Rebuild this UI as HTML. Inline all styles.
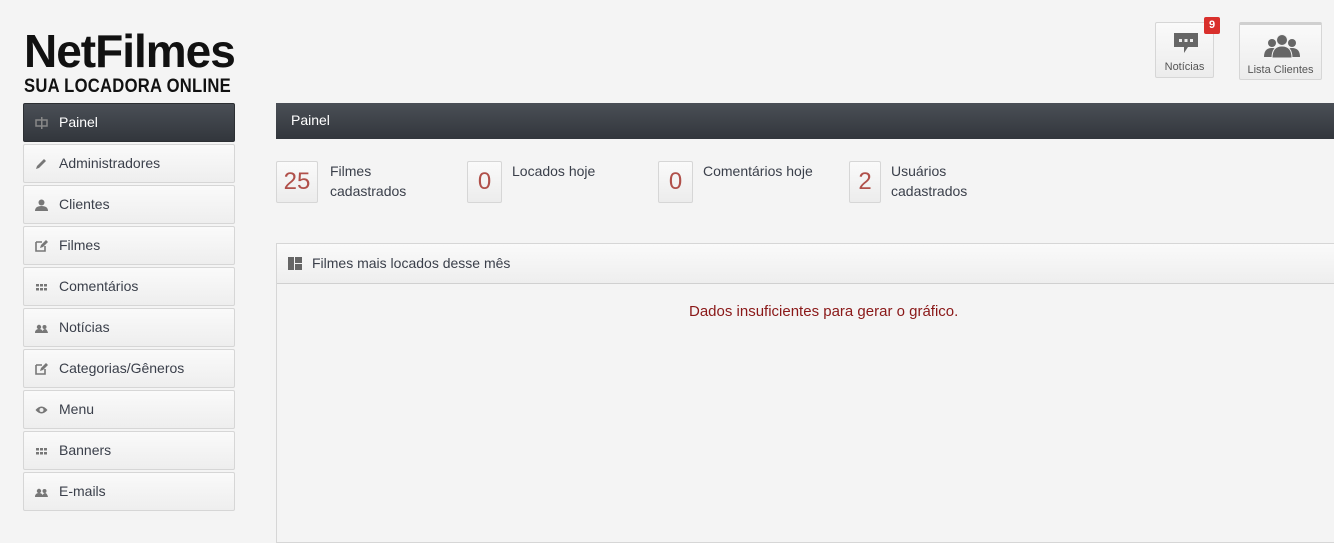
<!DOCTYPE html>
<html><head><meta charset="utf-8"><style>
*{box-sizing:border-box;margin:0;padding:0}
body{width:1334px;height:539px;overflow:hidden;background:#f4f4f4;font-family:"Liberation Sans",sans-serif;color:#444;position:relative}
.logo1{position:absolute;left:24px;top:28px;font:900 46px/46px "Liberation Sans",sans-serif;letter-spacing:-1px;color:#111;transform:scaleX(1.0);transform-origin:left;white-space:nowrap}
.logo2{position:absolute;left:24px;top:77px;font:700 19px/20px "Liberation Sans",sans-serif;color:#111;letter-spacing:0.3px;transform:scaleX(0.875);transform-origin:left;white-space:nowrap}
.nav{position:absolute;left:23px;width:212px;height:39px;background:linear-gradient(#fafafa,#eeeeee);border:1px solid #d6d6d6;border-radius:2px;font-size:14px;line-height:37px;padding-left:35px;color:#3a3f4a}
.nav.act{background:linear-gradient(#4a4f56,#32363c);color:#fff;border-color:#2c2f33}
.nav .ic{position:absolute;left:11px;top:13px;width:13px;height:12px}
.bar{position:absolute;left:276px;top:103px;width:1060px;height:36px;background:linear-gradient(#4a4f56,#32363c);color:#fff;font-size:14px;line-height:34px;padding-left:15px}
.sbox{position:absolute;top:161px;height:42px;background:linear-gradient(#fafafa,#ececec);border:1px solid #d6d6d6;border-radius:2px;color:#b0504a;font-size:24px;line-height:40px;text-align:center}
.slab{position:absolute;top:161px;font-size:14px;line-height:20px;color:#3a3f4a}
.panel{position:absolute;left:276px;top:243px;width:1070px;height:300px;border:1px solid #d6d6d6}
.ph{height:40px;background:linear-gradient(#fafafa,#eeeeee);border-bottom:1px solid #d0d0d0;font-size:14px;line-height:38px;padding-left:35px;position:relative;color:#3a3f4a}
.msg{position:absolute;left:689px;top:303px;color:#8a1818;font-size:15px}
.tb{position:absolute;background:linear-gradient(#fafafa,#ececec);border:1px solid #d6d6d6;border-radius:2px;font-size:11px;color:#555;text-align:center}
</style></head><body>
<div class="logo1">NetFilmes</div>
<div class="logo2">SUA LOCADORA ONLINE</div>

<div class="nav act" style="top:103px"><svg class="ic" viewBox="0 0 13 12"><rect x="1" y="3" width="11" height="6" fill="none" stroke="#888" stroke-width="1.5"/><rect x="6" y="0" width="1.5" height="12" fill="#888"/></svg>Painel</div>
<div class="nav" style="top:144px"><svg class="ic" viewBox="0 0 13 12"><path d="M1 11l1-3 7-7 2 2-7 7z" fill="#777"/></svg>Administradores</div>
<div class="nav" style="top:185px"><svg class="ic" viewBox="0 0 13 12"><circle cx="6.5" cy="3.5" r="3" fill="#777"/><path d="M0 12q0-5 6.5-5t6.5 5z" fill="#777"/></svg>Clientes</div>
<div class="nav" style="top:226px"><svg class="ic" viewBox="0 0 13 12"><path d="M1 2h6M1 2v9h9V6" fill="none" stroke="#777" stroke-width="1.6"/><path d="M5 8l1-3 5-5 2 2-5 5z" fill="#777"/></svg>Filmes</div>
<div class="nav" style="top:267px"><svg class="ic" viewBox="0 0 13 12"><g fill="#777"><rect x="1" y="3" width="3" height="2.5"/><rect x="5" y="3" width="3" height="2.5"/><rect x="9" y="3" width="3" height="2.5"/><rect x="1" y="7" width="3" height="2.5"/><rect x="5" y="7" width="3" height="2.5"/><rect x="9" y="7" width="3" height="2.5"/></g></svg>Comentários</div>
<div class="nav" style="top:308px"><svg class="ic" viewBox="0 0 13 12"><g fill="#777"><circle cx="4" cy="5" r="2.2"/><path d="M0 11q0-4 4-4t4 4z"/><circle cx="9.5" cy="5" r="2"/><path d="M7 11q1-4 3-4t3 4z"/></g></svg>Notícias</div>
<div class="nav" style="top:349px"><svg class="ic" viewBox="0 0 13 12"><path d="M1 2h6M1 2v9h9V6" fill="none" stroke="#777" stroke-width="1.6"/><path d="M5 8l1-3 5-5 2 2-5 5z" fill="#777"/></svg>Categorias/Gêneros</div>
<div class="nav" style="top:390px"><svg class="ic" viewBox="0 0 13 12"><path d="M0.5 6q6-7 12 0q-6 7-12 0z" fill="#777"/><circle cx="6.5" cy="6" r="2" fill="#eee"/></svg>Menu</div>
<div class="nav" style="top:431px"><svg class="ic" viewBox="0 0 13 12"><g fill="#777"><rect x="1" y="3" width="3" height="2.5"/><rect x="5" y="3" width="3" height="2.5"/><rect x="9" y="3" width="3" height="2.5"/><rect x="1" y="7" width="3" height="2.5"/><rect x="5" y="7" width="3" height="2.5"/><rect x="9" y="7" width="3" height="2.5"/></g></svg>Banners</div>
<div class="nav" style="top:472px"><svg class="ic" viewBox="0 0 13 12"><g fill="#777"><circle cx="4" cy="5" r="2.2"/><path d="M0 11q0-4 4-4t4 4z"/><circle cx="9.5" cy="5" r="2"/><path d="M7 11q1-4 3-4t3 4z"/></g></svg>E-mails</div>

<div class="tb" style="left:1155px;top:22px;width:59px;height:56px"><svg style="position:absolute;left:18px;top:10px" width="24" height="22" viewBox="0 0 24 22"><path d="M0 0h24v14h-10l-4 6v-6h-10z" fill="#666"/><g fill="#eee"><rect x="5" y="6" width="3" height="3"/><rect x="10.5" y="6" width="3" height="3"/><rect x="16" y="6" width="3" height="3"/></g></svg><div style="position:absolute;left:0;right:0;top:38px">Notícias</div>
<div style="position:absolute;left:48px;top:-6px;width:16px;height:17px;background:#d9302c;color:#fff;font-size:11px;font-weight:bold;line-height:17px;border-radius:2px">9</div></div>
<div class="tb" style="left:1239px;top:22px;width:83px;height:58px;border-top:3px solid #d0d0d0"><svg style="position:absolute;left:24px;top:9px" width="36" height="24" viewBox="0 0 36 24"><g fill="#666"><circle cx="8" cy="9" r="4"/><path d="M0 23q0-9 8-9t8 9z"/><circle cx="28" cy="9" r="4"/><path d="M20 23q0-9 8-9t8 9z"/><circle cx="18" cy="6" r="5.5" stroke="#f2f2f2" stroke-width="1"/><path d="M8 24q0-12 10-12t10 12z" stroke="#f2f2f2" stroke-width="1"/></g></svg><div style="position:absolute;left:0;right:0;top:39px">Lista Clientes</div></div>

<div class="bar">Painel</div>

<div class="sbox" style="left:276px;width:42px">25</div><div class="slab" style="left:330px">Filmes<br>cadastrados</div>
<div class="sbox" style="left:467px;width:35px">0</div><div class="slab" style="left:512px">Locados hoje</div>
<div class="sbox" style="left:658px;width:35px">0</div><div class="slab" style="left:703px">Comentários hoje</div>
<div class="sbox" style="left:849px;width:32px">2</div><div class="slab" style="left:891px">Usuários<br>cadastrados</div>

<div class="panel"><div class="ph"><svg style="position:absolute;left:11px;top:13px" width="14" height="13" viewBox="0 0 14 13"><g fill="#666"><rect x="0" y="0" width="6" height="13"/><rect x="7" y="0" width="7" height="6"/><rect x="7" y="7" width="7" height="6"/></g></svg>Filmes mais locados desse mês</div></div>
<div class="msg">Dados insuficientes para gerar o gráfico.</div>
</body></html>
